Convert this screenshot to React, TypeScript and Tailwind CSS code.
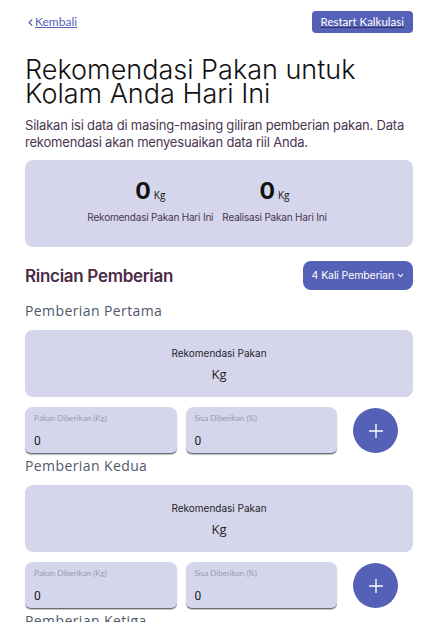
import React from 'react';
import { FiChevronLeft, FiChevronDown, FiPlus } from 'react-icons/fi';

const feedings = ['Pemberian Pertama', 'Pemberian Kedua', 'Pemberian Ketiga', 'Pemberian Keempat'];

const FilledInput = ({ label, value }: { label: string; value: string }) => (
  <div className="flex-1 h-[47px] bg-[#d5d6eb] rounded-t-[8px] rounded-b-[6px] border-b border-[#6b6b78] shadow-[0_1px_1px_rgba(0,0,0,0.25)] px-[9px] pt-[6px] flex flex-col">
    <span className="text-[8px] leading-[10px] text-[#9b9aa8] font-['Lato',sans-serif]">{label}</span>
    <span className="mt-[11px] text-[12px] leading-[14px] text-[#1c1c1c] font-['Roboto',sans-serif]">{value}</span>
  </div>
);

const FeedingSection = ({ title }: { title: string }) => (
  <div className="flex flex-col">
    <h3 className="text-[14px] leading-[18px] tracking-[0.4px] text-[#50596a] font-['Open_Sans',sans-serif]">{title}</h3>
    <div className="mt-[10px] h-[67px] bg-[#d5d6eb] rounded-[8px] flex flex-col items-center justify-center font-['Inter',sans-serif] text-[#1f1f2a]">
      <span className="text-[10px] leading-[14px]">Rekomendasi Pakan</span>
      <span className="mt-[6px] text-[13px] leading-[16px] font-['Open_Sans',sans-serif]">Kg</span>
    </div>
    <div className="mt-[10px] flex items-center">
      <div className="flex gap-[9px] w-[312px]">
        <FilledInput label="Pakan Diberikan (Kg)" value="0" />
        <FilledInput label="Sisa Diberikan (%)" value="0" />
      </div>
      <button className="ml-[16px] w-[45px] h-[45px] rounded-full bg-[#5561b6] flex items-center justify-center text-white">
        <FiPlus size={22} strokeWidth={1.5} />
      </button>
    </div>
  </div>
);

export default function App() {
  return (
    <div className="w-[444px] h-[622px] overflow-hidden bg-white pl-[25px] pr-[31px] pt-[11px] font-['Inter',sans-serif]">
      <div className="flex items-center justify-between">
        <a href="#" className="flex items-center text-[12px] leading-[14px] text-[#5561b6] font-['Lato',sans-serif]">
          <FiChevronLeft size={11} strokeWidth={2.5} className="-mr-[1px]" />
          <span className="underline">Kembali</span>
        </a>
        <button className="h-[22px] px-[9px] rounded-[4px] bg-[#5561b6] text-white text-[11.5px] font-['Lato',sans-serif] underline decoration-[#3a2c6a]">
          Restart Kalkulasi
        </button>
      </div>

      <h1 className="mt-[25px] text-[27px] leading-[24px] font-light text-[#111]">
        Rekomendasi Pakan untuk Kolam Anda Hari Ini
      </h1>
      <p className="mt-[11px] text-[13px] leading-[17px] text-[#4b3550] tracking-[-0.2px]">
        Silakan isi data di masing-masing giliran pemberian pakan. Data rekomendasi akan menyesuaikan data riil Anda.
      </p>

      <div className="mt-[9px] h-[87px] bg-[#d5d6eb] rounded-[8px] flex justify-center pr-[24px] pt-[20px] gap-[9px]">
        {['Rekomendasi Pakan Hari Ini', 'Realisasi Pakan Hari Ini'].map((l) => (
          <div key={l} className="flex flex-col items-center">
            <div className="flex items-end">
              <span className="text-[23px] leading-[22px] font-bold text-[#111]">0</span>
              <span className="ml-[3px] text-[10px] leading-[14px] text-[#111] font-['Open_Sans',sans-serif]">Kg</span>
            </div>
            <span className="mt-[9px] text-[10px] leading-[12px] text-[#4b3550] tracking-[-0.2px]">{l}</span>
          </div>
        ))}
      </div>

      <div className="mt-[14px] flex items-center justify-between">
        <h2 className="text-[17px] leading-[22px] font-semibold text-[#4a2b48] tracking-[-0.3px]">Rincian Pemberian</h2>
        <button className="h-[29px] pl-[9px] pr-[8px] rounded-[8px] bg-[#5561b6] text-white text-[10.5px] tracking-[-0.1px] flex items-center gap-[2px]">
          4 Kali Pemberian
          <FiChevronDown size={9} strokeWidth={3} />
        </button>
      </div>

      <div className="mt-[12px] flex flex-col gap-[3px]">
        {feedings.map((f) => (
          <FeedingSection key={f} title={f} />
        ))}
      </div>
    </div>
  );
}
